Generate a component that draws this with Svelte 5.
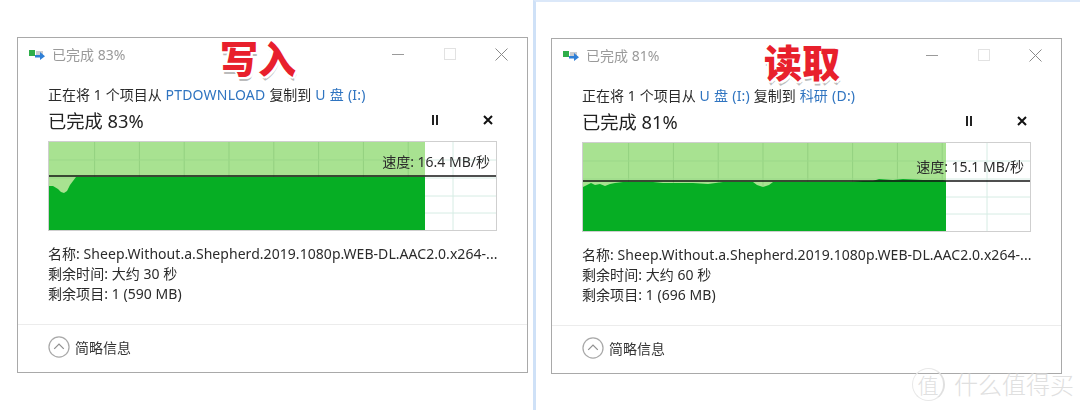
<script>
  const gridX = [45.6, 90.4, 135.2, 180, 224.8, 269.6, 314.4, 359.2, 404];
  const gridY = [18, 36, 54, 71];

  const left = {
    title: "已完成 83%",
    source: "PTDOWNLOAD",
    sourceDrive: "",
    target: "U 盘",
    targetDrive: "(I:)",
    done: "已完成 83%",
    speed: "速度: 16.4 MB/秒",
    lineY: 34,
    fillW: 376,
    profile: "0,44 4,44 9,47 12,50 15,51 18,49 21,43 27,35 376,35",
    remaining: "大约 30 秒",
    items: "1 (590 MB)",
    sticker: "写入",
    stickerX: 202,
    stickerY: -6
  };
  const right = {
    title: "已完成 81%",
    source: "U 盘",
    sourceDrive: "(I:)",
    target: "科研",
    targetDrive: "(D:)",
    done: "已完成 81%",
    speed: "速度: 15.1 MB/秒",
    lineY: 38,
    fillW: 363,
    profile: "0,44 4,42 8,40 12,42 17,41 22,43 27,41 32,40 40,39 70,39 80,40 110,40 125,41 140,39 170,39 174,42 180,44 186,42 190,39 270,39 280,38 290,38 296,36 310,37 320,36 340,37 360,37 363,38",
    remaining: "大约 60 秒",
    items: "1 (696 MB)",
    sticker: "读取",
    stickerX: 212,
    stickerY: -3
  };
</script>

{#snippet dialog(d)}
  <section class="dialog">
    <div class="inner">
      <header class="titlebar">
        <svg class="appicon" viewBox="0 0 17 12" width="17" height="12">
          <rect x="0" y="2" width="6" height="6" fill="#2fae4a" />
          <rect x="7" y="3" width="7" height="5" fill="#c9ccd1" />
          <path d="M6 7h5V4l5 4.200-5 3.800V9.500H6z" fill="#2f7fd6" />
        </svg>
        <span class="title">{d.title}</span>
        <div class="controls">
          <span class="ctl"><i class="min"></i></span>
          <span class="ctl"><i class="max"></i></span>
          <span class="ctl">
            <svg viewBox="0 0 13 13" width="13" height="13"><path d="M.5.500l12 12M12.500.500l-12 12" stroke="#8a8a8a" fill="none" /></svg>
          </span>
        </div>
      </header>

      <div class="body">
        <p class="copyline">
          正在将 1 个项目从 <span class="link">{d.source} {d.sourceDrive}</span> 复制到 <span class="link">{d.target} {d.targetDrive}</span>
        </p>
        <div class="doneRow">
          <span class="done">{d.done}</span>
          <div class="actions">
            <svg viewBox="0 0 10 10" width="10" height="10"><path d="M2 0h2v10H2zM6 0h2v10H6z" fill="#222" /></svg>
            <svg viewBox="0 0 10 10" width="10" height="10"><path d="M1 1l8 8M9 1l-8 8" stroke="#111" stroke-width="2" fill="none" /></svg>
          </div>
        </div>

        <div class="graph">
          <svg viewBox="0 0 447 88" width="447" height="88" preserveAspectRatio="none">
            <rect x="0" y="0" width={d.fillW} height="88" fill="#a8e291" />
            {#each gridX as x}
              <line x1={x} x2={x} y1="0" y2="88" stroke={x < d.fillW ? "#93d180" : "#d6ece4"} />
            {/each}
            {#each gridY as y}
              <line x1={d.fillW} x2="447" y1={y} y2={y} stroke="#d6ece4" />
              <line x1="0" x2={d.fillW} y1={y} y2={y} stroke="#9bd889" />
            {/each}
            <polygon points="{d.profile} {d.fillW},88 0,88" fill="#06ae24" />
            <line x1="0" x2="447" y1={d.lineY} y2={d.lineY} stroke="#141414" stroke-width="1.500" />
          </svg>
          <span class="speed" style="top: {d.lineY - 24}px">{d.speed}</span>
        </div>

        <ul class="info">
          <li>名称: Sheep.Without.a.Shepherd.2019.1080p.WEB-DL.AAC2.0.x264-...</li>
          <li>剩余时间: {d.remaining}</li>
          <li>剩余项目: {d.items}</li>
        </ul>
      </div>

      <footer class="foot">
        <svg viewBox="0 0 23 23" width="22" height="22">
          <circle cx="11.500" cy="11.500" r="10.500" fill="none" stroke="#a9a9a9" stroke-width="1.300" />
          <path d="M6.500 13.500l5-5 5 5" fill="none" stroke="#8f8f8f" stroke-width="1.300" />
        </svg>
        <span>简略信息</span>
      </footer>
    </div>

    <div class="sticker" style="left: {d.stickerX}px; top: {d.stickerY}px">{d.sticker}</div>
  </section>
{/snippet}

<main class="page">
  <div class="leftSide">
    {@render dialog(left)}
  </div>
  <div class="rightSide">
    {@render dialog(right)}
    <div class="watermark">
      <span class="badge">值</span>
      <span>什么值得买</span>
    </div>
  </div>
</main>

<style>
  :global(body) {
    margin: 0;
    background: #fff;
  }

  .page {
    display: flex;
    width: 1080px;
    height: 410px;
    overflow: hidden;
    background: #fff;
    font-family: "Noto Sans", "Noto Sans CJK SC", sans-serif;
    color: #2b2b2b;
  }

  .leftSide {
    width: 533px;
    box-sizing: border-box;
    padding: 37px 0 0 17px;
  }

  .rightSide {
    position: relative;
    flex: 1;
    box-sizing: border-box;
    padding: 36px 0 0 15px;
    border-left: 3px solid #cfe1f7;
    border-top: 2px solid #dbe8f9;
  }

  .dialog {
    position: relative;
    box-sizing: border-box;
    width: 511px;
    height: 336px;
    border: 1px solid #a9a9a9;
    background: #fff;
  }

  .inner {
    display: flex;
    flex-direction: column;
    height: 100%;
    filter: blur(0.35px);
  }

  .titlebar {
    display: flex;
    align-items: center;
    height: 32px;
    padding: 0 0 0 11px;
  }

  .appicon {
    margin-right: 6px;
  }

  .title {
    font-size: 14px;
    color: #9a9a9a;
  }

  .controls {
    display: flex;
    margin-left: auto;
    padding-right: 19px;
    gap: 39px;
  }

  .ctl {
    display: flex;
    align-items: center;
    justify-content: center;
    width: 13px;
    height: 13px;
  }

  .min {
    display: block;
    width: 12px;
    height: 1px;
    background: #9a9a9a;
  }

  .max {
    display: block;
    width: 10px;
    height: 10px;
    border: 1px solid #e2e2e2;
  }

  .body {
    flex: 1;
    padding: 15px 30px 0 30px;
  }

  .copyline {
    margin: 0;
    font-size: 14px;
    line-height: 20px;
    color: #2b2b2b;
    word-spacing: 0.2px;
  }

  .link {
    color: #2f74c0;
    letter-spacing: 0.2px;
  }

  .doneRow {
    display: flex;
    align-items: center;
    height: 30px;
  }

  .done {
    padding-top: 1px;
    font-size: 18.3px;
    line-height: 28px;
    color: #222;
  }

  .actions {
    display: flex;
    gap: 43px;
    margin-left: auto;
    margin-right: 4px;
  }

  .graph {
    position: relative;
    width: 447px;
    height: 88px;
    margin-top: 6px;
    border: 1px solid #cfcfcf;
  }

  .graph svg {
    display: block;
  }

  .speed {
    position: absolute;
    right: 6px;
    font-size: 14px;
    line-height: 20px;
    color: #2b2b2b;
  }

  .info {
    list-style: none;
    margin: 13px 0 0;
    padding: 0;
    font-size: 14px;
    line-height: 20px;
    letter-spacing: 0.05px;
    white-space: nowrap;
  }

  .foot {
    display: flex;
    align-items: center;
    gap: 5px;
    box-sizing: border-box;
    height: 48px;
    padding: 0 0 4px 30px;
    border-top: 1px solid #ececec;
    font-size: 14px;
    color: #333;
  }

  .sticker {
    position: absolute;
    font-family: "Noto Sans CJK SC", sans-serif;
    font-weight: 900;
    font-size: 38px;
    line-height: 50px;
    color: #e8202c;
    text-shadow:
      2px 0 #fff, -2px 0 #fff, 0 2px #fff, 0 -2px #fff,
      2px 2px #fff, -2px 2px #fff, 2px -2px #fff, -2px -2px #fff,
      1px 4px #bbb;
  }

  .watermark {
    position: absolute;
    left: 376px;
    top: 366px;
    display: flex;
    align-items: center;
    gap: 9px;
    font-size: 24px;
    font-weight: 300;
    line-height: 32px;
    color: #e0e0e0;
    white-space: nowrap;
    text-shadow: 0 0 2px #fff, 0 0 2px #fff;
  }

  .badge {
    display: flex;
    align-items: center;
    justify-content: center;
    box-sizing: border-box;
    width: 33px;
    height: 33px;
    border-radius: 50%;
    border: 1px solid #e8e8e8;
    border-right: 2px solid #e0e0e0;
    font-size: 21px;
  }
</style>
